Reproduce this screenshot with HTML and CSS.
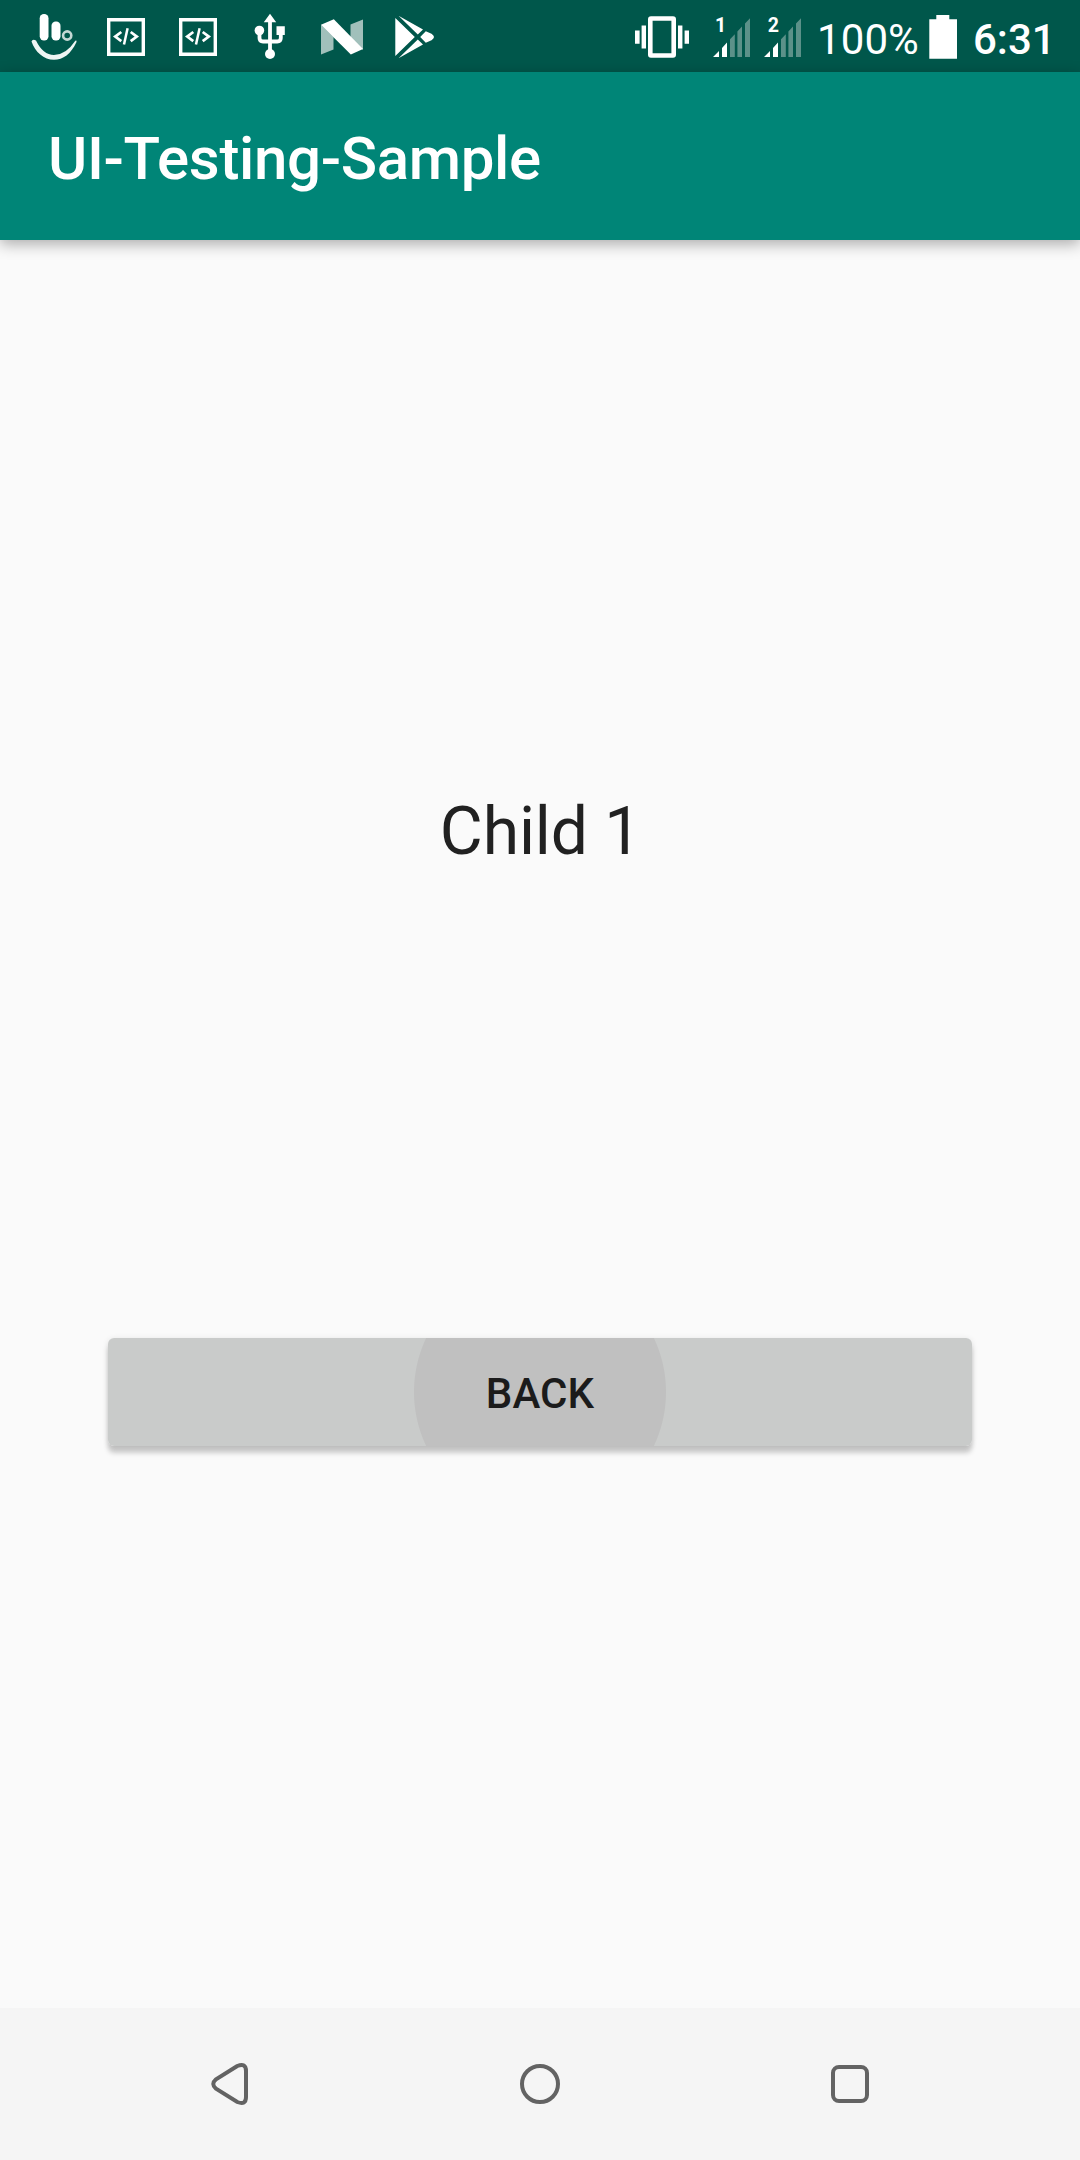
FILE: index.html
```html
<!DOCTYPE html>
<html lang="en">
<head>
<meta charset="utf-8">
<title>UI-Testing-Sample</title>
<link rel="stylesheet" href="styles.css">
</head>
<body>
<div class="screen">
  <header class="status-bar">
    <div class="notifications">
      <svg class="notification" viewBox="18 0 72 72">
        <rect x="39.7" y="14" width="8.8" height="26.5" rx="4.2"/>
        <rect x="51.5" y="21.5" width="9" height="19" rx="4.2"/>
        <circle class="ring" cx="67.2" cy="35.5" r="4.1"/>
        <path class="smile" d="M31.5 41.5Q32.5 38.5 36 40.5Q43 55 54 55Q66 55 75.3 40.8Q76.8 40 76.5 42C71 54 63 59.8 54 59.8C44 59.8 35 52 31.5 41.5Z"/>
      </svg>
      <svg class="notification" viewBox="90 0 72 72">
        <path d="M107 18h38v38h-38zM110.4 21.4v31.2h31.2v-31.2z" fill-rule="evenodd"/>
        <path class="code" d="M121.3 32L115.2 36.6L121.3 41.2M130.7 32L136.8 36.6L130.7 41.2"/><path class="code slash" d="M127.6 28.2L124 44.5"/>
      </svg>
      <svg class="notification" viewBox="90 0 72 72">
        <path d="M107 18h38v38h-38zM110.4 21.4v31.2h31.2v-31.2z" fill-rule="evenodd"/>
        <path class="code" d="M121.3 32L115.2 36.6L121.3 41.2M130.7 32L136.8 36.6L130.7 41.2"/><path class="code slash" d="M127.6 28.2L124 44.5"/>
      </svg>
      <svg class="notification" viewBox="234 0 72 72">
        <path d="M270 13.7L276.2 22.3H263.8ZM276.5 26.3h8.3v8.7h-8.3z"/>
        <circle cx="259.4" cy="30.5" r="4.8"/>
        <circle cx="270" cy="54" r="5"/>
        <path class="wire" d="M270 21V52M259.5 31V38Q259.5 41.5 263 41.5H277.3Q280.8 41.5 280.8 38V33"/>
      </svg>
      <svg class="notification" viewBox="306 0 72 72">
        <path class="faded" d="M321 24.5L333.5 37V49.5L321 54.5ZM350.5 24.5L363 19.5V50L350.5 38Z"/>
        <path d="M321 24.8L333.8 19.3L363 49L350.8 54.5Z"/>
      </svg>
      <svg class="notification" viewBox="378 0 72 72">
        <path d="M395.3 18L414.8 37L395.3 56ZM398.5 15.7L423 29.5L417.8 34.5ZM398.5 58.3L423 44.5L417.8 39.5ZM420.2 37L425.8 31.2L431.5 33.8Q434 35.5 434 37Q434 38.5 431.5 40.2L425.8 42.8Z"/>
      </svg>
    </div>
    <div class="system">
      <svg class="vibrate" viewBox="635 0 54 72">
        <path d="M651 16.3h22q3 0 3 3v35.4q0 3-3 3h-22q-3 0-3-3V19.3q0-3 3-3zM652.6 20.8v32.4h18.8V20.8z" fill-rule="evenodd"/>
        <path d="M641.6 25.6h4.4v23h-4.4zM635 30.4h4.6v13.4H635zM678 25.6h4.4v23H678zM684.6 30.4h4.4v13.4h-4.4z"/>
      </svg>
      <svg class="signal" viewBox="713 0 37 72">
        <path d="M713 57L719 51V57ZM722 57V48L727 42.5V57Z"/>
        <path class="weak" d="M730 57V39.2L734.8 34.3V57ZM737.4 57V31.5L742 26.5V57ZM745 57V23.5L750 18.3V57Z"/>
        <text x="715" y="32">1</text>
      </svg>
      <svg class="signal" viewBox="713 0 37 72">
        <path d="M713 57L719 51V57ZM722 57V48L727 42.5V57Z"/>
        <path class="weak" d="M730 57V39.2L734.8 34.3V57ZM737.4 57V31.5L742 26.5V57ZM745 57V23.5L750 18.3V57Z"/>
        <text x="716.7" y="32">2</text>
      </svg>
      <span class="percent">100%</span>
      <svg class="battery" viewBox="929 0 28 72">
        <path d="M936.3 15h13v4.3h7.7v39.4h-27.7V19.3h7z"/>
      </svg>
      <span class="clock">6:31</span>
    </div>
  </header>
  <div class="app-bar"><h1 class="title">UI-Testing-Sample</h1></div>
  <main class="content">
    <p class="label">Child 1</p>
    <button class="back-button" type="button">BACK</button>
  </main>
  <nav class="nav-bar">
    <svg class="nav-icon" viewBox="200 2054 60 60"><path d="M237.3 2066L216 2079.3Q210.5 2084 216 2088.7L237.3 2102Q246 2105.5 246 2097V2071Q246 2062.5 237.3 2066Z"/></svg>
    <svg class="nav-icon" viewBox="510 2054 60 60"><circle cx="540" cy="2084" r="18"/></svg>
    <svg class="nav-icon" viewBox="820 2054 60 60"><rect x="833" y="2067" width="34" height="34" rx="6"/></svg>
  </nav>
</div>
</body>
</html>
```
FILE: styles.css
```css
* { box-sizing: border-box; }

body {
  margin: 0;
  font-family: Roboto, sans-serif;
  background: #fafafa;
}

.screen {
  display: flex;
  flex-direction: column;
  width: 1080px;
  height: 2160px;
  overflow: hidden;
}

.status-bar {
  display: flex;
  justify-content: space-between;
  height: 72px;
  padding: 0 29px 0 18px;
  background: #00574b;
  color: #fff;
}

.notifications, .system { display: flex; }
.status-bar svg { flex: none; height: 72px; fill: #fff; }
.status-bar .smile { fill: #eef5f3; }
.notification { width: 72px; }
.status-bar .ring { fill: none; stroke: #c4d8d5; stroke-width: 2.6; }
.status-bar .code { fill: none; stroke: #fff; stroke-width: 2.7; }
.status-bar .slash { stroke-width: 2.5; }
.status-bar .wire { fill: none; stroke: #fff; stroke-width: 3.8; }
.faded { fill: #a1c0bb; }

.vibrate { width: 54px; margin-right: 24px; }
.signal { width: 37px; margin-right: 14px; }
.signal text { font: 700 19.5px Roboto, sans-serif; }
.weak { fill: #5c9189; }
.percent, .clock { font-size: 42px; line-height: 80px; white-space: nowrap; }
.percent { width: 101px; margin-left: 2px; letter-spacing: .1px; }
.battery { width: 28px; margin: 0 16px 0 11px; }
.clock { width: 78px; font-weight: 500; }

.app-bar {
  position: relative;
  display: flex;
  align-items: center;
  height: 168px;
  padding: 5px 48px 0;
  background: #008577;
  box-shadow: 0 4px 14px rgba(0, 0, 0, .32);
}

.title {
  margin: 0;
  color: #fff;
  font-size: 60px;
  font-weight: 500;
  letter-spacing: -.34px;
  line-height: 72px;
}

.content {
  flex: 1;
  display: flex;
  flex-direction: column;
  align-items: center;
  padding-top: 552px;
}

.label {
  margin: 0 0 466px;
  padding-left: 1px;
  color: #212121;
  font-size: 66px;
  letter-spacing: -.1px;
  line-height: 80px;
}

.back-button {
  width: 864px;
  height: 108px;
  padding: 4px 0 0;
  border: 0;
  border-radius: 6px;
  background: radial-gradient(circle at center, #c0c0c0 125.5px, #c9cbca 126.5px);
  box-shadow: 0 7px 5px rgba(0, 0, 0, .19), 0 1px 6px rgba(0, 0, 0, .1);
  color: #1b1b1b;
  font: 500 42px/104px Roboto, sans-serif;
  letter-spacing: .1px;
}

.nav-bar {
  display: flex;
  align-items: center;
  justify-content: space-between;
  height: 152px;
  padding: 0 200px;
  background: #f5f5f5;
}

.nav-icon { width: 60px; height: 60px; fill: none; stroke: #636363; stroke-width: 4; }
```
